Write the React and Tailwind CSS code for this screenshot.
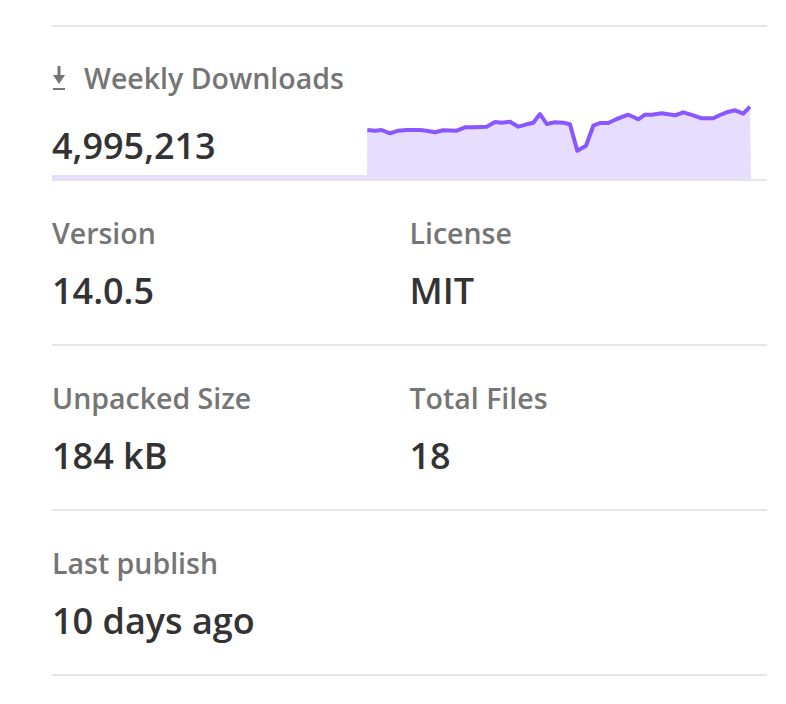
import React from 'react';

const points = [
  [0.3, 30], [8, 30.7], [14.7, 30], [23, 33.3], [31.3, 30.7], [39.7, 30], [53, 30], [59.7, 30.7],
  [68, 32.3], [76.3, 30.3], [89.7, 30.7], [98, 27.3], [108, 27.3], [119.7, 26.7], [128, 22],
  [134.7, 22.7], [143, 21.7], [151.3, 26.7], [159.7, 24.3], [166.3, 22.7], [173, 14], [179.7, 24],
  [188, 22.3], [196.3, 22.7], [203, 24.3], [210.3, 50.7], [219, 45.7], [226.3, 25.7], [233, 23],
  [241.3, 23], [249.7, 19], [261.3, 14.7], [271.3, 19.3], [278, 14.7], [284.7, 14.7], [294.7, 13.3],
  [308, 15.3], [316.3, 12.3], [326.3, 15.3], [334.7, 18.3], [346.3, 18.3], [353, 15], [359.7, 12.3],
  [368, 10.3], [376.3, 13.7], [383, 6.7],
];

function Sparkline() {
  const line = points.map(([x, y]) => `${x},${y}`).join(' ');
  const area = `0,79 ${line} 384,79`;
  return (
    <svg width="384" height="79" viewBox="0 0 384 79" className="block">
      <polygon points={area} fill="#e7ddff" />
      <polyline points={line} fill="none" stroke="#8956ff" strokeWidth="4" strokeLinejoin="round" />
    </svg>
  );
}

function DownloadIcon() {
  return (
    <svg width="12" height="24" viewBox="0 0 12 24" className="block">
      <rect x="4.5" y="0" width="3" height="11" fill="#757575" />
      <polygon points="0,9 12,9 6,18" fill="#757575" />
      <rect x="0" y="22" width="12" height="2" fill="#757575" />
    </svg>
  );
}

function Stat({ label, value }) {
  return (
    <div>
      <h3 className="m-0 text-[28.5px] leading-[40px] font-semibold text-[#757575]">{label}</h3>
      <p className="m-0 mt-[16px] text-[36px] leading-[44px] font-semibold text-[#333333]">{value}</p>
    </div>
  );
}

export default function App() {
  const rows = [
    [{ label: 'Version', value: '14.0.5' }, { label: 'License', value: 'MIT' }],
    [{ label: 'Unpacked Size', value: '184 kB' }, { label: 'Total Files', value: '18' }],
    [{ label: 'Last publish', value: '10 days ago' }],
  ];

  return (
    <div className="min-h-[704px] bg-white pt-[25px] pl-[52px] pr-[19px]" style={{ fontFamily: '"Open Sans", sans-serif' }}>
      {/* Weekly downloads */}
      <div className="border-t-2 border-b-2 border-[#e5e5e5] pt-[31px]">
        <div className="flex items-center h-[40px]">
          <span className="ml-[1px] mr-[19px]"><DownloadIcon /></span>
          <h3 className="m-0 text-[28.5px] leading-[40px] font-semibold text-[#757575]">Weekly Downloads</h3>
        </div>
        <div className="flex items-end mt-[2px]">
          <div className="flex-1 flex flex-col">
            <p className="m-0 text-[36px] leading-[44px] font-semibold text-[#333333]">4,995,213</p>
            <div className="mt-[7px] h-[4px] bg-[#e7ddff]" />
          </div>
          <div className="mr-[16px]">
            <Sparkline />
          </div>
        </div>
      </div>

      {rows.map((row, i) => (
        <div key={i} className="grid grid-cols-2 border-b-2 border-[#e5e5e5] pt-[32px] pb-[31px]">
          {row.map((s) => (
            <Stat key={s.label} label={s.label} value={s.value} />
          ))}
        </div>
      ))}
    </div>
  );
}
